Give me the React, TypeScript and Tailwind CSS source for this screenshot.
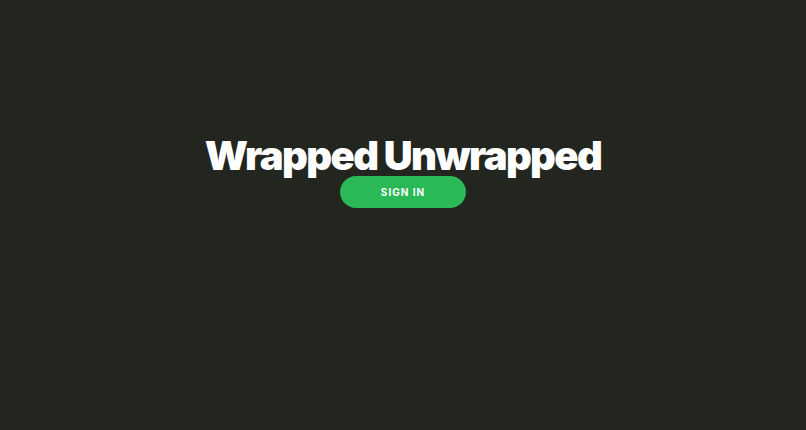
export default function App() {
  return (
    <div className="min-h-screen bg-[#23251f] font-['Inter',sans-serif]">
      <main className="flex flex-col items-center pt-[136px]">
        <h1 className="text-[40px] leading-[40px] font-black tracking-[-0.04em] text-white">
          Wrapped Unwrapped
        </h1>
        <button className="w-[126px] h-[32px] rounded-full bg-[#2bb857] text-white text-[10px] font-bold tracking-[0.1em]">
          SIGN IN
        </button>
      </main>
    </div>
  )
}
